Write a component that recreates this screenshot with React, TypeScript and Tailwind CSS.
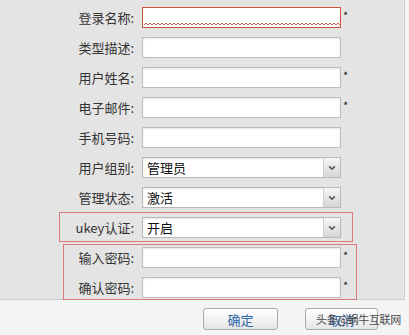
import React from 'react';

const font = { fontFamily: '"Noto Sans CJK SC", "Liberation Sans", sans-serif' };

type Row = { label: string; kind: 'text' | 'select'; value?: string; required?: boolean; invalid?: boolean };

const rows: Row[] = [
  { label: '登录名称:', kind: 'text', required: true, invalid: true },
  { label: '类型描述:', kind: 'text' },
  { label: '用户姓名:', kind: 'text', required: true },
  { label: '电子邮件:', kind: 'text', required: true },
  { label: '手机号码:', kind: 'text' },
  { label: '用户组别:', kind: 'select', value: '管理员' },
  { label: '管理状态:', kind: 'select', value: '激活' },
  { label: 'ukey认证:', kind: 'select', value: '开启' },
  { label: '输入密码:', kind: 'text', required: true },
  { label: '确认密码:', kind: 'text', required: true },
];

function Squiggle() {
  return (
    <svg className="absolute left-[1px] bottom-[1px]" width="196" height="4" viewBox="0 0 196 4">
      <defs>
        <pattern id="sq" width="4" height="4" patternUnits="userSpaceOnUse">
          <path d="M0 3 L2 1 L4 3" fill="none" stroke="#d0502f" strokeWidth="0.9" />
        </pattern>
      </defs>
      <rect width="196" height="4" fill="url(#sq)" />
    </svg>
  );
}

function Field({ row }: { row: Row }) {
  if (row.kind === 'select') {
    return (
      <div className="relative flex h-[21px] w-[199px] items-center border border-[#b9b9b9] bg-white shadow-[inset_0_1px_2px_rgba(0,0,0,0.10)]">
        <span className="pl-[4px] text-[13px] leading-none text-[#111]">{row.value}</span>
        <div className="absolute right-0 top-0 bottom-0 flex w-[17px] items-center justify-center border-l border-[#cfcfcf] bg-gradient-to-b from-[#f6f6f6] to-[#d6d6d6]">
          <svg width="8" height="6" viewBox="0 0 8 6">
            <path d="M1.2 1.4 L4 4.2 L6.8 1.4" fill="none" stroke="#555" strokeWidth="1.6" />
          </svg>
        </div>
      </div>
    );
  }
  return (
    <div
      className={
        row.invalid
          ? 'relative h-[21px] w-[199px] border border-[#c9573c] bg-white'
          : 'relative h-[21px] w-[199px] border border-[#bdbdbd] bg-white shadow-[inset_0_1px_2px_rgba(0,0,0,0.10)]'
      }
    >
      {row.invalid && <Squiggle />}
    </div>
  );
}

export default function App() {
  return (
    <div className="h-[335px] w-[409px] overflow-hidden bg-[#f4f4f4] text-[#333]" style={font}>
      <div className="relative h-[300px] w-[405px] border-r border-b border-[#cdcdcd] bg-[#e4e4e4]">
        {rows.map((row) => (
          <div key={row.label} className="flex h-[30px] items-start pt-[7px]">
            <div className="flex h-[21px] w-[134px] items-center justify-end text-[13px] leading-none text-[#333]">
              {row.label}
            </div>
            <div className="ml-[8px]">
              <Field row={row} />
            </div>
            {row.required && <span className="ml-[2px] mt-[3px] text-[11px] leading-none text-[#222]">*</span>}
          </div>
        ))}

        {/* highlight annotations */}
        <div className="pointer-events-none absolute left-[59px] top-[212px] h-[30px] w-[294px] border border-[#e07a7a]" />
        <div className="pointer-events-none absolute left-[63px] top-[244px] h-[56px] w-[294px] border border-[#e07a7a]" />
      </div>

      <div className="relative flex h-[35px] gap-[27px] pl-[203px] pt-[8px]">
        <button className="flex h-[22px] w-[75px] items-center justify-center rounded-[3px] border border-[#a9a9a9] bg-gradient-to-b from-white to-[#e6e6e6] text-[13px] leading-none text-[#2c66a8]">
          确定
        </button>
        <button className="flex h-[22px] w-[73px] items-center justify-center rounded-[3px] border border-[#a9a9a9] bg-gradient-to-b from-white to-[#e6e6e6] text-[13px] leading-none text-[#2c66a8]">
          取消
        </button>
        <span className="pointer-events-none absolute left-[316px] top-[14px] text-[11px] leading-none tracking-[-0.3px] text-[#4a4a4a]">
          头条@蜗牛互联网
        </span>
      </div>
    </div>
  );
}
